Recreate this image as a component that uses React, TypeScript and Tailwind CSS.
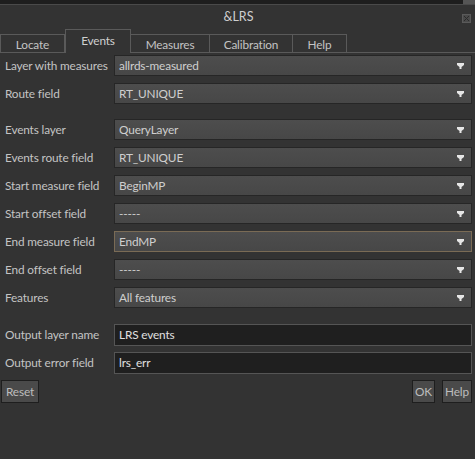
import React from "react";

const font = { fontFamily: 'Lato, "Open Sans", "DejaVu Sans", sans-serif' };
const txt = "text-[11.8px] tracking-[-0.15px]";

function Arrow() {
  return (
    <svg width="9" height="8" viewBox="0 0 9 8" className="shrink-0">
      <polygon points="1,1 8,1 8,3 5.5,5 5.5,7 3.5,7 3.5,5 1,3" fill="#e6e6e6" />
    </svg>
  );
}

function Combo({ value, focus }: { value: string; focus?: boolean }) {
  return (
    <div
      className={
        "flex-1 h-[21px] flex items-center justify-between pl-[4px] pr-[6px] border bg-gradient-to-b from-[#4d4d4d] to-[#474747] " +
        (focus ? "border-[#7a6b55]" : "border-[#262626]")
      }
    >
      <span className={txt + " text-[#cfcfcf] leading-none"}>{value}</span>
      <Arrow />
    </div>
  );
}

function Input({ value }: { value: string }) {
  return (
    <div className="flex-1 h-[22px] flex items-center pl-[4px] border border-[#555555] bg-[#1f1f1f]">
      <span className={txt + " text-[#e0e0e0] leading-none"}>{value}</span>
    </div>
  );
}

function Row({ label, children, mt }: { label: string; children: React.ReactNode; mt: string }) {
  return (
    <div className={"flex items-center " + mt}>
      <div className={"w-[114px] shrink-0 whitespace-nowrap pl-[5px] text-[#c4c4c4] leading-none " + txt}>{label}</div>
      {children}
    </div>
  );
}

export default function App() {
  const tabs = [
    { name: "Locate", w: "w-[65px]" },
    { name: "Events", w: "w-[66px]", sel: true },
    { name: "Measures", w: "w-[80px]" },
    { name: "Calibration", w: "w-[84px]" },
    { name: "Help", w: "w-[55px]" },
  ];
  return (
    <div style={font} className="w-[475px] h-[459px] bg-[#333333] flex flex-col overflow-hidden">
      <div className="h-[5px] bg-[#1e1e1e] border-b border-[#4a4a4a] flex justify-end">
        <div className="w-[12px] h-[4px] bg-[#555555]" />
      </div>
      <div className="h-[24px] flex items-center relative">
        <div className="flex-1 text-center text-[12.5px] text-[#cfcfcf] pl-[2px]">&amp;LRS</div>
        <div className="absolute right-[4px] top-[9px] w-[9px] h-[9px] bg-[#4a4a4a] border border-[#5a5a5a] flex items-center justify-center">
          <svg width="7" height="7" viewBox="0 0 7 7">
            <path d="M1 1 L6 6 M6 1 L1 6" stroke="#2a2a2a" strokeWidth="1" />
          </svg>
        </div>
      </div>
      <div className="h-[24px] flex items-end border-b border-[#5a5a5a]">
        {tabs.map((t) =>
          t.sel ? (
            <div
              key={t.name}
              className={t.w + " h-[24px] -mb-px bg-[#333333] border border-b-0 border-[#5a5a5a] flex justify-center pt-[5px] text-[#d0d0d0] leading-none " + txt}
            >
              {t.name}
            </div>
          ) : (
            <div
              key={t.name}
              className={t.w + " h-[18px] -ml-px first:ml-0 border-l border-t border-r border-[#5a5a5a] flex items-center justify-center text-[#c4c4c4] leading-none pt-[3px] " + txt}
            >
              {t.name}
            </div>
          )
        )}
      </div>
      <div className="flex flex-col pr-[3px]">
        <Row label="Layer with measures" mt="mt-[2px]">
          <Combo value="allrds-measured" />
        </Row>
        <Row label="Route field" mt="mt-[7px]">
          <Combo value="RT_UNIQUE" />
        </Row>
        <Row label="Events layer" mt="mt-[15px]">
          <Combo value="QueryLayer" />
        </Row>
        <Row label="Events route field" mt="mt-[7px]">
          <Combo value="RT_UNIQUE" />
        </Row>
        <Row label="Start measure field" mt="mt-[7px]">
          <Combo value="BeginMP" />
        </Row>
        <Row label="Start offset field" mt="mt-[7px]">
          <Combo value="-----" />
        </Row>
        <Row label="End measure field" mt="mt-[7px]">
          <Combo value="EndMP" focus />
        </Row>
        <Row label="End offset field" mt="mt-[7px]">
          <Combo value="-----" />
        </Row>
        <Row label="Features" mt="mt-[7px]">
          <Combo value="All features" />
        </Row>
        <Row label="Output layer name" mt="mt-[16px]">
          <Input value="LRS events" />
        </Row>
        <Row label="Output error field" mt="mt-[6px]">
          <Input value="lrs_err" />
        </Row>
        <div className="flex items-center mt-[6px] pl-[1px]">
          <button className={"h-[23px] px-[4px] bg-[#4a4a4a] border border-[#1e1e1e] text-[#bdbdbd] leading-none " + txt}>
            Reset
          </button>
          <div className="flex-1" />
          <button className={"h-[23px] w-[23px] bg-[#4a4a4a] border border-[#1e1e1e] text-[#bdbdbd] leading-none " + txt}>
            OK
          </button>
          <button className={"h-[23px] w-[30px] ml-[7px] bg-[#4a4a4a] border border-[#1e1e1e] text-[#bdbdbd] leading-none " + txt}>
            Help
          </button>
        </div>
      </div>
    </div>
  );
}
